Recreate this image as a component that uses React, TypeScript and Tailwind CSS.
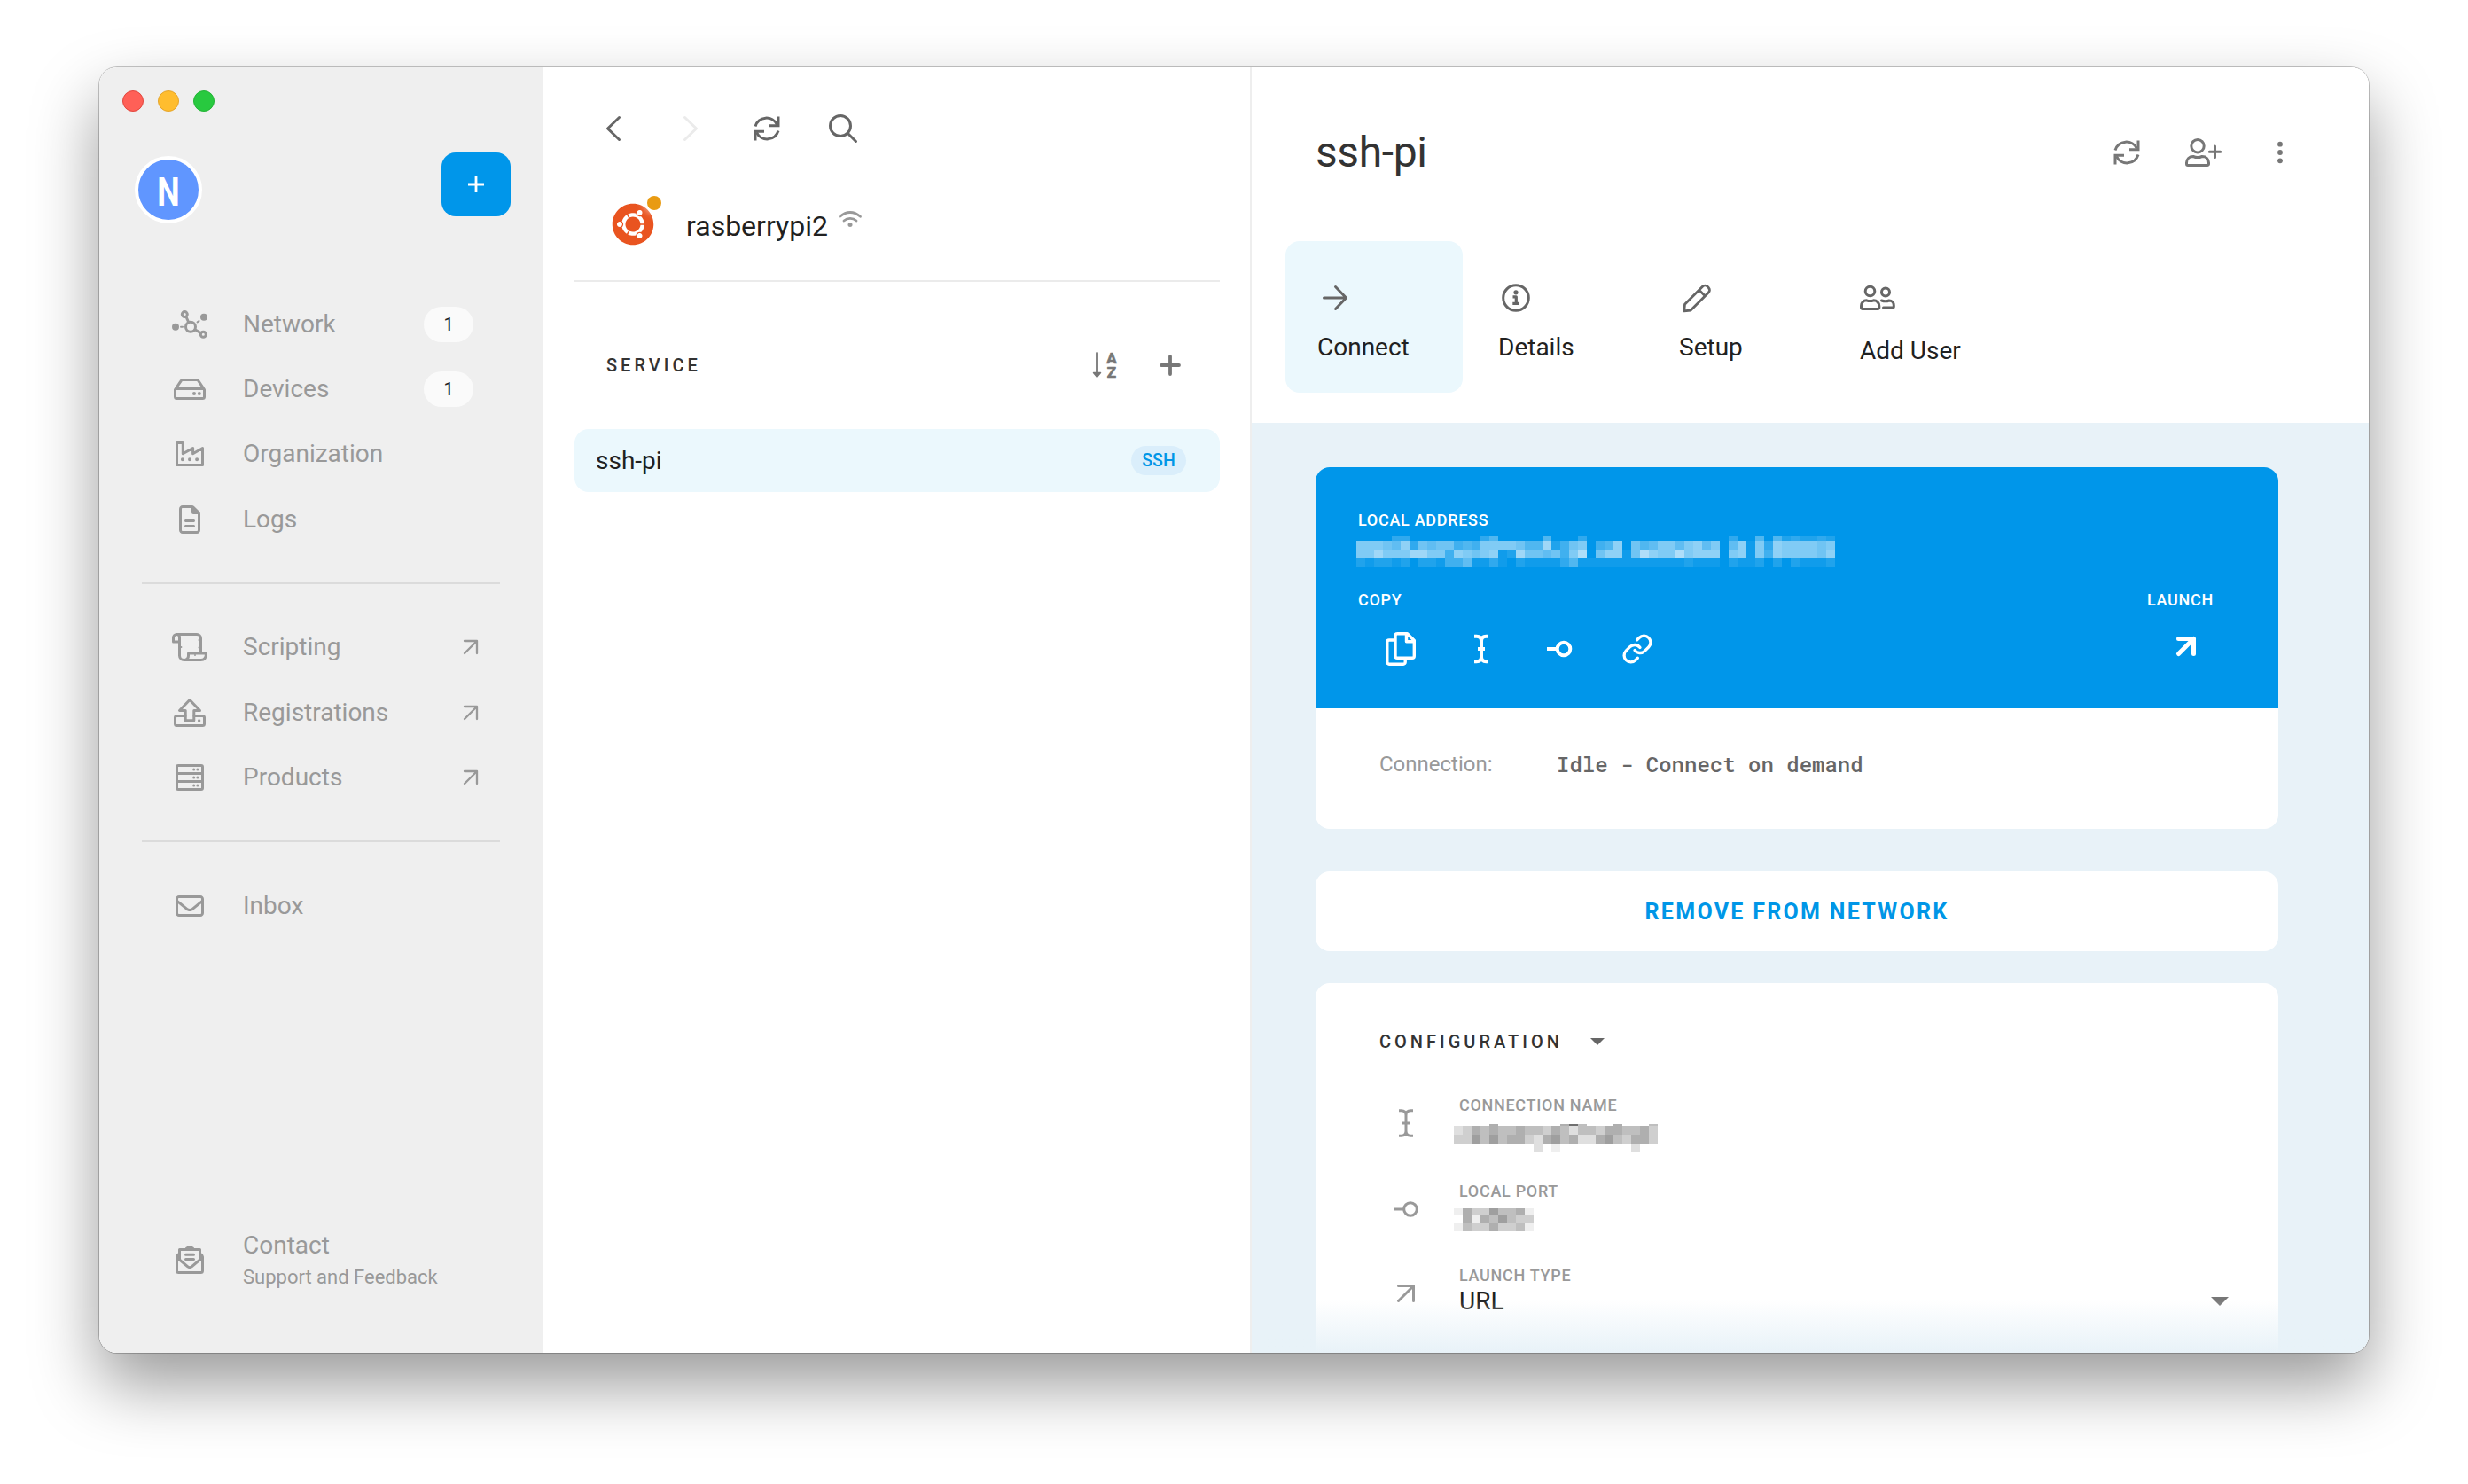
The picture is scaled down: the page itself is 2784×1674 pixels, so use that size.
import type { ReactNode } from 'react';
import clsx from 'clsx';
import { FaRegEnvelope, FaRegFileLines } from 'react-icons/fa6';
import { FaUbuntu } from 'react-icons/fa';
import { Link } from 'lucide-react';

interface StrokeIconProps {
  width: number;
  height: number;
  stroke?: number;
  children: ReactNode;
}

const StrokeIcon = ({
  width,
  height,
  stroke = 3,
  children,
}: StrokeIconProps) => (
  <svg
    width={width}
    height={height}
    viewBox={`0 0 ${width} ${height}`}
    fill="none"
    stroke="currentColor"
    strokeWidth={stroke}
    strokeLinecap="round"
    strokeLinejoin="round"
    className="block shrink-0 overflow-visible"
  >
    {children}
  </svg>
);

const Dot = ({ x, y, r }: { x: number; y: number; r: number }) => (
  <circle cx={x} cy={y} r={r} fill="currentColor" stroke="none" />
);

const NetworkIcon = () => (
  <StrokeIcon width={40} height={32}>
    <Dot x={4} y={18.8} r={4} />
    <Dot x={36} y={7.8} r={4} />
    <circle cx={14.3} cy={4.6} r={3} />
    <circle cx={21} cy={18.8} r={5.5} />
    <circle cx={35.3} cy={27.3} r={3} />
    <path d="M16 7.5l2.5 5.5M26 21.8l6.3 3.8" />
    <path d="M10 18.8h2M28.6 13.4l2-1.4" strokeWidth={2} />
  </StrokeIcon>
);

const DriveIcon = () => (
  <StrokeIcon width={36} height={24}>
    <path d="M1.5 12.5L8 2.8q.8-1.3 2-1.3h16q1.2 0 2 1.3L34.5 12.5v8a2 2 0 0 1-2 2h-29a2 2 0 0 1-2-2zM2.5 11.5h31" />
    <Dot x={23} y={17} r={2} />
    <Dot x={28.8} y={17} r={2} />
  </StrokeIcon>
);

const FactoryIcon = () => (
  <StrokeIcon width={32} height={28}>
    <path d="M1.5 1.5H8.3V13.8L19.6 7.5V13.8L30.5 7.5V26.5H1.5z" />
    <path d="M7.9 20.3v.01M16 20.3v.01M24.1 20.3v.01" strokeWidth={4} />
  </StrokeIcon>
);

const ScrollIcon = () => (
  <StrokeIcon width={40} height={32}>
    <path d="M8.5 10H1.5V5.5a4 4 0 0 1 4-4H28a4.5 4.5 0 0 1 4.5 4.5V21.5" />
    <path d="M5.5 1.5a3 3 0 0 1 3 3V25.5a5 5 0 0 0 5 5H32.5c4 0 6-3 6-7.5H18.5v2.5a5 5 0 0 1-4 5" />
    <path d="M10.4 16v.01M30.5 8v.01M30.5 16.5v.01M26 25v.01" strokeWidth={2} />
  </StrokeIcon>
);

const RegistrationIcon = () => (
  <StrokeIcon width={36} height={32}>
    <path d="M18 1.5L6.5 13.5H13.2V24.8H22.8V13.5H29.5z" />
    <path d="M13 19.5H3.5a2 2 0 0 0-2 2v7a2 2 0 0 0 2 2h29a2 2 0 0 0 2-2v-7a2 2 0 0 0-2-2H23" />
    <Dot x={28.6} y={25} r={1.7} />
  </StrokeIcon>
);

const ServerIcon = () => (
  <StrokeIcon width={32} height={30}>
    <rect x={1.5} y={1.5} width={29} height={27} rx={1.5} />
    <path d="M1.5 10.4h29M1.5 19.4h29" />
    {[6, 15, 24].map((y) => (
      <g key={y}>
        <Dot x={20.7} y={y} r={1.5} />
        <Dot x={24.9} y={y} r={1.5} />
      </g>
    ))}
  </StrokeIcon>
);

const ContactIcon = () => (
  <StrokeIcon width={32} height={32}>
    <path d="M4.5 16V4.5h23V16" />
    <path d="M12.5 3.2Q16 .2 19.5 3.2z" fill="currentColor" />
    <path d="M4 9.5Q1.5 11 1.5 13.5v15a2 2 0 0 0 2 2h25a2 2 0 0 0 2-2v-15Q30.5 11 28 9.5" />
    <path d="M1.5 13.5L13.5 23.7Q16 25.8 18.5 23.7L30.5 13.5" />
    <path d="M11.5 10.3h9M11.5 15.5h9" />
  </StrokeIcon>
);

const ArrowUpRight = ({ size, stroke }: { size: number; stroke: number }) => (
  <StrokeIcon width={20} height={20} stroke={stroke}>
    <path
      d={`M${10 - size / 2} ${10 - size / 2}h${size}v${size}M${10 + size / 2} ${10 - size / 2}l${-size} ${size}`}
    />
  </StrokeIcon>
);

const RefreshIcon = () => (
  <StrokeIcon width={30} height={28}>
    <path
      d="M2 11.5A13.2 13.2 0 0 1 26.5 9.5M28 16.5A13.2 13.2 0 0 1 3.5 18.5"
      strokeLinecap="butt"
    />
    <path
      d="M28 .5V10.8H18M2 27.5V17.2H12"
      strokeLinejoin="miter"
      strokeLinecap="butt"
    />
  </StrokeIcon>
);

const SearchIcon = () => (
  <StrokeIcon width={32} height={32}>
    <circle cx={13} cy={13} r={11.5} />
    <path d="M21.5 21.5l9 9" />
  </StrokeIcon>
);

const UserPlusIcon = () => (
  <StrokeIcon width={40} height={32}>
    <circle cx={14} cy={8.7} r={7.2} />
    <path d="M9 20.5c3 1.3 7 1.3 10 0 4.5 0 7.5 3 7.5 7v1.5a1.5 1.5 0 0 1-1.5 1.5H3a1.5 1.5 0 0 1-1.5-1.5v-1.5c0-4 3-7 7.5-7z" />
    <path d="M33.5 9v12.5M27.3 15.3h12.4" />
  </StrokeIcon>
);

const UsersIcon = () => (
  <StrokeIcon width={40} height={28}>
    <circle cx={11.5} cy={6.5} r={5.3} />
    <circle cx={29} cy={7.5} r={4.5} />
    <path d="M7.5 16.8c2.5 1 5.5 1 8 0 3.5 0 6.3 2.7 6.3 6.2v2a1.5 1.5 0 0 1-1.5 1.5H3a1.5 1.5 0 0 1-1.5-1.5v-2c0-3.5 2.7-6.2 6-6.2z" />
    <path d="M24.5 17c3 1 6 1 8.5 0 3 0 5.3 2.3 5.3 5.5v1.2a1.3 1.3 0 0 1-1.3 1.3H26.5" />
  </StrokeIcon>
);

const InfoIcon = () => (
  <StrokeIcon width={32} height={32}>
    <circle cx={16} cy={16} r={14.3} />
    <Dot x={16} y={9.8} r={2.6} />
    <path d="M12.5 14.8H16.3V22M12.3 22.3h7.6" strokeLinecap="butt" strokeWidth={3.2} />
  </StrokeIcon>
);

const PencilIcon = () => (
  <StrokeIcon width={32} height={32} stroke={2.8}>
    <path d="M2.5 23.3L22.5 3.2a4 4 0 0 1 5.6 0l1.2 1.2a4 4 0 0 1 0 5.6L9.2 30l-7.5.8zM19 7.5l6 6" />
  </StrokeIcon>
);

const CopyIcon = () => (
  <StrokeIcon width={34} height={38} stroke={3.4}>
    <path d="M10.5 9H4a2.2 2.2 0 0 0-2.2 2.2V34a2.2 2.2 0 0 0 2.2 2.2H20a2.2 2.2 0 0 0 2.2-2.2V30" />
    <path d="M12.9 1.8H24.5L32.3 9.5V27a2.2 2.2 0 0 1-2.2 2.2H13.2a2.2 2.2 0 0 1-2.2-2.2V4a2.2 2.2 0 0 1 2.2-2.2zM23.5 2v8.7H32" />
  </StrokeIcon>
);

const CursorIcon = ({ stroke = 3 }: { stroke?: number }) => (
  <StrokeIcon width={16} height={32} stroke={stroke}>
    <path
      d="M0 1.8h2.5Q8 1.8 8 7V25Q8 30.2 2.5 30.2H0M16 1.8h-2.5Q8 1.8 8 7M8 25Q8 30.2 13.5 30.2H16M4 16h8"
      strokeLinecap="butt"
    />
  </StrokeIcon>
);

const PortIcon = ({ stroke = 3 }: { stroke?: number }) => (
  <StrokeIcon width={28} height={18} stroke={stroke}>
    <circle cx={19} cy={9} r={7.3} />
    <path d="M0 9h11.5" strokeLinecap="butt" />
  </StrokeIcon>
);

const SortIcon = () => (
  <StrokeIcon width={28} height={30}>
    <path d="M5.5 1.5v22" strokeWidth={2.8} />
    <path d="M1.5 23.5h8L5.5 28.3z" fill="currentColor" strokeWidth={1.5} />
    <g
      fill="currentColor"
      strokeWidth={0.7}
      className="font-['Roboto',sans-serif] text-[17px] font-bold"
      textAnchor="middle"
    >
      <text x={22} y={12.8}>A</text>
      <text x={22} y={29.2}>Z</text>
    </g>
  </StrokeIcon>
);

const Caret = ({ width, height }: { width: number; height: number }) => (
  <svg width={width} height={height} viewBox="0 0 20 10" preserveAspectRatio="none">
    <path d="M0 0h20L10 10z" fill="currentColor" />
  </svg>
);

// Censored values. Each character is one 10px cell, its hex digit the strength.
const ADDRESS_MASK = [
  { height: 5, cells: '000033000000003500000500030000000000000000300505232232' },
  { height: 10, cells: '888769376774548888755a24780459075688689680691839888878' },
  { height: 10, cells: '88a888aa8849878912a776748b079917b988b89990891849888879' },
  { height: 10, cells: '212212022144611310211113511111111111121110211202021112' },
];
const NAME_MASK = [
  { height: 2, cells: '00005000000059400050004' },
  { height: 10, cells: '23545445443542443554453' },
  { height: 10, cells: '33646455325645225643553' },
  { height: 9, cells: '00000000020100000000200' },
];
const PORT_MASK = [
  { height: 7, cells: '153364451' },
  { height: 10, cells: '051546433' },
  { height: 9, cells: '143353341' },
];

const Mask = ({ rows }: { rows: { height: number; cells: string }[] }) => {
  const width = rows[0].cells.length * 10;
  const height = rows.reduce((sum, row) => sum + row.height, 0);
  let top = 0;

  return (
    <svg width={width} height={height} fill="currentColor" shapeRendering="crispEdges" className="block">
      {rows.map((row, r) => {
        const y = top;
        top += row.height;
        return row.cells.split('').map((cell, i) => (
          <rect
            key={`${r}-${i}`}
            x={i * 10}
            y={y}
            width={10}
            height={row.height}
            opacity={parseInt(cell, 16) / 16}
          />
        ));
      })}
    </svg>
  );
};

const NavItem = ({
  icon,
  label,
  count,
  external,
}: {
  icon: ReactNode;
  label: string;
  count?: number;
  external?: boolean;
}) => (
  <div className="flex h-[73.3px] items-center pl-[72px] text-[28px]">
    <div className="flex w-[60px] justify-center">{icon}</div>
    <div className="ml-[30px] flex-1">{label}</div>
    {count !== undefined && (
      <div className="mr-[78px] flex h-10 w-14 items-center justify-center rounded-full bg-[#fafafa] text-[20px] text-[#212121]">
        {count}
      </div>
    )}
    {external && (
      <div className="mr-[71px]">
        <ArrowUpRight size={14} stroke={2.3} />
      </div>
    )}
  </div>
);

const Divider = () => <div className="mx-12 mt-[34.5px] mb-[35px] h-0.5 w-[404px] bg-[#dbdbdb]" />;

const Sidebar = () => (
  <aside className="flex w-[500px] shrink-0 flex-col bg-[#efefef] text-[#999]">
    <div className="flex gap-4 pt-[26px] pl-[26px]">
      <div className="size-6 rounded-full border border-[#e2483f] bg-[#ff6057]" />
      <div className="size-6 rounded-full border border-[#e5a52c] bg-[#ffbd2e]" />
      <div className="size-6 rounded-full border border-[#24b437] bg-[#28c93f]" />
    </div>
    <div className="mt-[46px] flex h-20 items-start justify-between pr-9 pl-10">
      <div className="mt-1 flex size-[76px] items-center justify-center rounded-full border-4 border-white bg-[#6096ff] text-[45px] font-bold text-white">
        <span className="scale-x-80 pt-1.5">N</span>
      </div>
      <div className="flex h-[72px] w-[78px] items-center justify-center rounded-2xl bg-[#0096ea] text-white">
        <StrokeIcon width={18} height={18} stroke={2.8}>
          <path d="M9 0v18M0 9h18" strokeLinecap="butt" />
        </StrokeIcon>
      </div>
    </div>
    <nav className="mt-[77px]">
      <NavItem icon={<NetworkIcon />} label="Network" count={1} />
      <NavItem icon={<DriveIcon />} label="Devices" count={1} />
      <NavItem icon={<FactoryIcon />} label="Organization" />
      <NavItem icon={<FaRegFileLines size={32} />} label="Logs" />
      <Divider />
      <NavItem icon={<ScrollIcon />} label="Scripting" external />
      <NavItem icon={<RegistrationIcon />} label="Registrations" external />
      <NavItem icon={<ServerIcon />} label="Products" external />
      <Divider />
      <NavItem icon={<FaRegEnvelope size={32} />} label="Inbox" />
    </nav>
    <div className="mt-auto flex items-center pb-[69px] pl-[72px]">
      <div className="flex w-[60px] justify-center">
        <ContactIcon />
      </div>
      <div className="ml-[30px]">
        <div className="text-[28px] leading-10">Contact</div>
        <div className="text-[22px] leading-8">Support and Feedback</div>
      </div>
    </div>
  </aside>
);

const ToolbarButton = ({ className, children }: { className?: string; children: ReactNode }) => (
  <div className={clsx('flex h-12 items-center justify-center', className)}>{children}</div>
);

const ServiceList = () => (
  <section className="flex w-[800px] shrink-0 flex-col border-r-2 border-[#eee] pr-[34px] pl-9 text-[#212121]">
    <div className="mt-[45px] flex pl-px text-[#666]">
      <ToolbarButton className="w-[86.5px]">
        <StrokeIcon width={16} height={28}>
          <path d="M14.5 1.5L1.5 14l13 12.5" />
        </StrokeIcon>
      </ToolbarButton>
      <ToolbarButton className="w-[86.5px] text-[#ebebeb]">
        <StrokeIcon width={16} height={28}>
          <path d="M1.5 1.5L14.5 14l-13 12.5" />
        </StrokeIcon>
      </ToolbarButton>
      <ToolbarButton className="w-[86.5px]">
        <RefreshIcon />
      </ToolbarButton>
      <ToolbarButton className="w-[85px]">
        <SearchIcon />
      </ToolbarButton>
    </div>

    <div className="mt-[60px] flex h-12 items-center pl-[42px]">
      <div className="relative text-[#e95420]">
        <FaUbuntu size={48} />
        <div className="absolute -top-2 -right-2 size-4 rounded-full bg-[#e99b12] shadow-[0_0_8px_3px_rgba(255,255,255,0.7)]" />
      </div>
      <div className="ml-9 pt-[3px] text-[32px]">rasberrypi2</div>
      <div className="mb-3 ml-3 text-[#999]">
        <StrokeIcon width={26} height={18} stroke={2.8}>
          <path d="M1.5 6.3Q7 1.5 13 1.5T24.5 6.3M6 11Q9 8.3 13 8.3T20 11" />
          <Dot x={13} y={15.5} r={2.5} />
        </StrokeIcon>
      </div>
    </div>
    <div className="mt-[39px] h-0.5 bg-[#ebebeb]" />

    <div className="mt-[70px] flex h-12 items-center pr-11 pl-9">
      <div className="flex-1 text-[20px] font-medium tracking-[4px] text-[#333]">SERVICE</div>
      <div className="flex items-center gap-12 text-[#777]">
        <SortIcon />
        <StrokeIcon width={24} height={24} stroke={3.8}>
          <path d="M12 2v20M2 12h20" />
        </StrokeIcon>
      </div>
    </div>

    <div className="mt-12 flex h-[71px] items-center justify-between rounded-2xl bg-[#ebf8fd] pr-[38px] pl-6">
      <div className="text-[28px]">ssh-pi</div>
      <div className="flex h-[33px] w-[62px] items-center justify-center rounded-full bg-[#daeefb] text-[19.5px] font-medium text-[#0096e7]">
        SSH
      </div>
    </div>
  </section>
);

const Tab = ({
  icon,
  label,
  active,
  labelClass = 'mt-5',
}: {
  icon: ReactNode;
  label: string;
  active?: boolean;
  labelClass?: string;
}) => (
  <div className={clsx('h-[171px] w-[200px] rounded-2xl pt-12 pl-9', active && 'bg-[#ebf8fd]')}>
    <div className="flex h-8 items-center text-[#666]">{icon}</div>
    <div className={clsx('text-[28px] leading-10 text-[#212121]', labelClass)}>{label}</div>
  </div>
);

const DetailHeader = () => (
  <header className="h-[401px] shrink-0 bg-white">
    <div className="flex pt-16 pr-[57px] pl-[72px]">
      <h1 className="flex-1 text-[48px] leading-[64px] tracking-[-0.4px] text-[#333]">ssh-pi</h1>
      <div className="flex text-[#777]">
        <ToolbarButton className="h-16 w-[86.5px]">
          <RefreshIcon />
        </ToolbarButton>
        <ToolbarButton className="h-16 w-[86.5px]">
          <UserPlusIcon />
        </ToolbarButton>
        <ToolbarButton className="h-16 w-[86.5px]">
          <StrokeIcon width={6} height={24}>
            <Dot x={3} y={2.7} r={2.9} />
            <Dot x={3} y={12} r={2.9} />
            <Dot x={3} y={21.3} r={2.9} />
          </StrokeIcon>
        </ToolbarButton>
      </div>
    </div>
    <div className="mt-[68px] flex gap-1 pl-[38px]">
      <Tab
        active
        label="Connect"
        icon={
          <div className="ml-1.5">
            <StrokeIcon width={28} height={28}>
              <path d="M1.5 14H26M14.5 1.5L26.5 14L14.5 26.5" />
            </StrokeIcon>
          </div>
        }
      />
      <Tab
        label="Details"
        icon={
          <div className="ml-1">
            <InfoIcon />
          </div>
        }
      />
      <Tab
        label="Setup"
        icon={
          <div className="ml-1">
            <PencilIcon />
          </div>
        }
      />
      <Tab label="Add User" icon={<UsersIcon />} labelClass="mt-6" />
    </div>
  </header>
);

const ConnectionCard = () => (
  <div className="h-[408px] w-[1086px] shrink-0 overflow-hidden rounded-2xl bg-white">
    <div className="h-[272px] bg-[#0096ea] pt-12 pr-[55px] pl-12 text-[18px] leading-6 font-medium tracking-[0.7px] text-white">
      <div>LOCAL ADDRESS</div>
      <div className="mt-1.5 -ml-0.5">
        <Mask rows={ADDRESS_MASK} />
      </div>
      <div className="mt-[25px] flex justify-between">
        <div>
          <div>COPY</div>
          <div className="mt-[19px] flex">
            <ToolbarButton className="w-[95px]">
              <CopyIcon />
            </ToolbarButton>
            <ToolbarButton className="w-[88px]">
              <CursorIcon stroke={4} />
            </ToolbarButton>
            <ToolbarButton className="w-[88px]">
              <PortIcon stroke={4} />
            </ToolbarButton>
            <ToolbarButton className="w-[88px]">
              <Link size={36} strokeWidth={2.2} />
            </ToolbarButton>
          </div>
        </div>
        <div className="w-24">
          <div className="pl-[3px]">LAUNCH</div>
          <ToolbarButton className="mt-4 pr-0.5">
            <ArrowUpRight size={17} stroke={5} />
          </ToolbarButton>
        </div>
      </div>
    </div>
    <div className="flex pt-[47px] pl-[72px] text-[24px] leading-8">
      <div className="w-[200px] text-[#999]">Connection:</div>
      <div className="font-['Roboto_Mono','Liberation_Mono',monospace] font-medium text-[#666]">
        Idle - Connect on demand
      </div>
    </div>
  </div>
);

const Field = ({ icon, label, children }: { icon: ReactNode; label: string; children: ReactNode }) => (
  <div className="flex pl-[72px]">
    <div className="flex h-[61px] w-[60px] items-center justify-center text-[#999]">{icon}</div>
    <div className="ml-[30px] flex-1">
      <div className="pt-px text-[18px] leading-5 font-medium tracking-[0.7px] text-[#999]">
        {label}
      </div>
      <div className="flex h-[38px]">{children}</div>
    </div>
  </div>
);

const ConfigurationCard = () => (
  <div className="mt-9 h-[460px] w-[1086px] shrink-0 rounded-2xl bg-white pt-[50px]">
    <div className="flex h-8 items-center pl-[72px]">
      <div className="text-[20px] font-medium tracking-[4px] text-[#333]">CONFIGURATION</div>
      <div className="ml-[31px] text-[#666]">
        <Caret width={16} height={8} />
      </div>
    </div>
    <div className="mt-[45px] flex flex-col">
      <Field icon={<CursorIcon />} label="CONNECTION NAME">
        <div className="mt-[11px] -ml-1.5">
          <Mask rows={NAME_MASK} />
        </div>
      </Field>
      <div className="mt-9">
        <Field icon={<PortIcon />} label="LOCAL PORT">
          <div className="mt-[9px] -ml-1.5">
            <Mask rows={PORT_MASK} />
          </div>
        </Field>
      </div>
      <div className="mt-[34px]">
        <Field icon={<ArrowUpRight size={17} stroke={3} />} label="LAUNCH TYPE">
          <div className="flex flex-1 items-center justify-between pr-14 text-[28px] text-[#212121]">
            URL
            <span className="text-[#777]">
              <Caret width={20} height={10} />
            </span>
          </div>
        </Field>
      </div>
    </div>
  </div>
);

const ServiceDetail = () => (
  <main className="flex flex-1 flex-col">
    <DetailHeader />
    <div className="relative flex flex-1 flex-col overflow-hidden bg-[#e8f2f8] pt-[50px] pl-[72px]">
      <ConnectionCard />
      <button className="mt-12 h-[90px] w-[1086px] shrink-0 rounded-2xl bg-white pt-0.5 text-[25px] font-bold tracking-[2.3px] text-[#0096e7]">
        REMOVE FROM NETWORK
      </button>
      <ConfigurationCard />
      <div className="absolute inset-x-0 bottom-0 h-[60px] bg-linear-to-b from-[#e8f2f8]/0 to-[#e8f2f8]" />
    </div>
  </main>
);

const App = () => (
  <div className="h-[1674px] w-[2784px] overflow-hidden bg-white px-28 pt-[76px] font-['Roboto',sans-serif]">
    <div className="h-[1450px] w-[2560px] rounded-[20px] shadow-[0_0_0_1px_rgba(0,0,0,0.22),0_36px_76px_rgba(0,0,0,0.4)]">
      <div className="flex h-full overflow-hidden rounded-[20px] bg-white">
        <Sidebar />
        <ServiceList />
        <ServiceDetail />
      </div>
    </div>
  </div>
);

export default App;
